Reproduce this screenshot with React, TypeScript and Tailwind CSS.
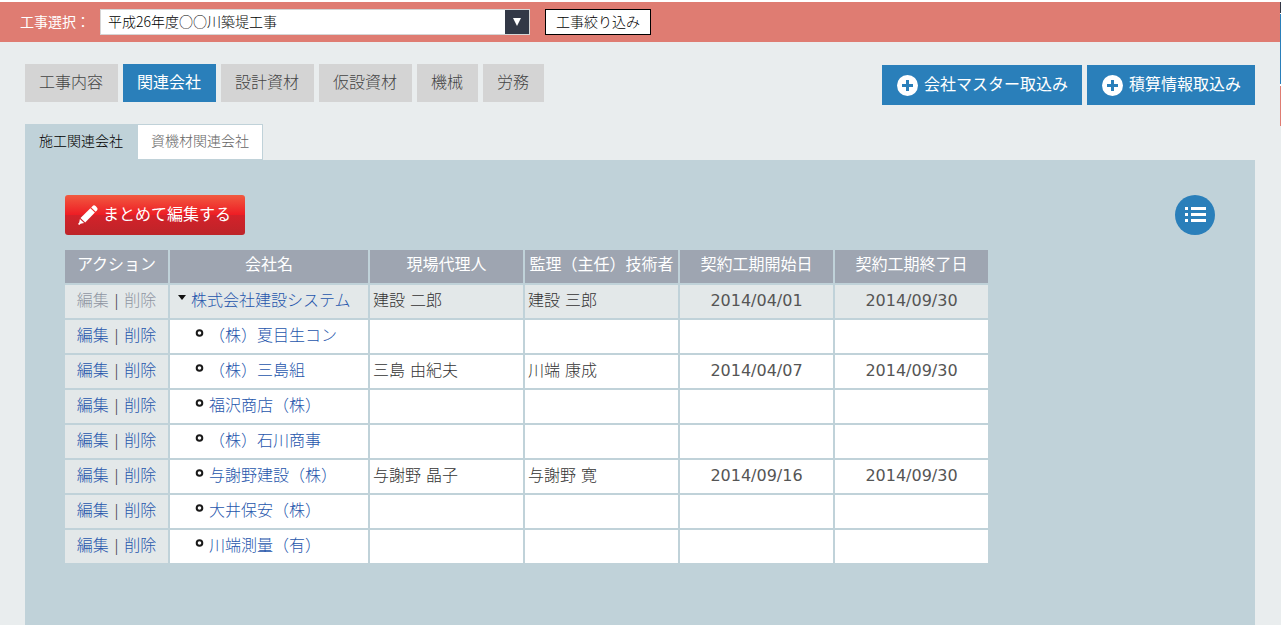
import { useState } from 'react';
import clsx from 'clsx';

type Company = {
  name: string;
  agent?: string;
  engineer?: string;
  start?: string;
  end?: string;
  root?: boolean;
};

const mainTabs = ['工事内容', '関連会社', '設計資材', '仮設資材', '機械', '労務'];
const subTabs = ['施工関連会社', '資機材関連会社'];
const importButtons = ['会社マスター取込み', '積算情報取込み'];

const companies: Company[] = [
  { name: '株式会社建設システム', agent: '建設 二郎', engineer: '建設 三郎', start: '2014/04/01', end: '2014/09/30', root: true },
  { name: '（株）夏目生コン' },
  { name: '（株）三島組', agent: '三島 由紀夫', engineer: '川端 康成', start: '2014/04/07', end: '2014/09/30' },
  { name: '福沢商店（株）' },
  { name: '（株）石川商事' },
  { name: '与謝野建設（株）', agent: '与謝野 晶子', engineer: '与謝野 寛', start: '2014/09/16', end: '2014/09/30' },
  { name: '大井保安（株）' },
  { name: '川端測量（有）' },
];

function PlusIcon() {
  return (
    <svg className="w-[21px] h-[21px]" viewBox="0 0 21 21" aria-hidden="true">
      <circle cx="10.5" cy="10.5" r="10.5" fill="#fff" />
      <path d="M9 5h3v4h4v3h-4v4H9v-4H5V9h4z" fill="#2a7fba" />
    </svg>
  );
}

function PencilIcon() {
  return (
    <svg className="w-5 h-5" viewBox="0 0 20 20" fill="#fff" aria-hidden="true">
      <path d="M14.4 1.2c1-1.100 2.200-1.100 3.200-.1l1.300 1.300c.9.9.9 2 0 3l-1.200 1.300-4.500-4.300z" />
      <path d="M12.400 3.300l4.500 4.300L7.200 17.600 2.500 13z" />
      <path d="M1.900 13.900l4.200 4.100-3.500.8L1.200 20 0 18.900l1.200-1.500z" />
    </svg>
  );
}

function ListIcon() {
  return (
    <svg className="w-[21px] h-[15px]" viewBox="0 0 21 15" fill="#fff" aria-hidden="true">
      <path d="M0 0h3v3H0zM6 0h15v3H6zM0 6h3v3H0zM6 6h15v3H6zM0 12h3v3H0zM6 12h15v3H6z" />
    </svg>
  );
}

function CompanyRow({ company }: { company: Company }) {
  const cell = company.root ? 'bg-[#e3e8e9]' : 'bg-white';
  const actionLink = company.root ? 'text-[#8f96a3]' : 'text-[#2656ac]';
  return (
    <tr className="h-[33px]">
      <td className="bg-[#e3e8e9] text-center whitespace-nowrap pb-0.5">
        <a href="#" className={actionLink}>編集</a>
        {' | '}
        <a href="#" className={actionLink}>削除</a>
      </td>
      <td className={clsx(cell, 'pb-0.5', company.root ? 'pl-2' : 'pl-[25px]')}>
        <div className="flex items-center gap-[5px]">
          {company.root ? (
            <svg className="w-2 h-3" viewBox="0 0 8 12" aria-hidden="true">
              <path d="M0 0h8L4 5z" fill="#111" />
            </svg>
          ) : (
            <svg className="w-[9px] h-3.5" viewBox="0 0 9 14" aria-hidden="true">
              <circle cx="4.500" cy="4" r="2.800" fill="none" stroke="#1a1a1a" strokeWidth="2" />
            </svg>
          )}
          <a href="#" className="text-[#2656ac]">{company.name}</a>
        </div>
      </td>
      <td className={clsx(cell, 'pl-[3px] pb-0.5')}>{company.agent}</td>
      <td className={clsx(cell, 'pl-[3px] pb-0.5')}>{company.engineer}</td>
      <td className={clsx(cell, 'text-center font-normal text-[#555] pb-0.5')}>{company.start}</td>
      <td className={clsx(cell, 'text-center font-normal text-[#555] pb-0.5')}>{company.end}</td>
    </tr>
  );
}

export default function App() {
  const [mainTab, setMainTab] = useState('関連会社');
  const [subTab, setSubTab] = useState('施工関連会社');

  return (
    <div className="min-h-screen flex bg-[#e9edee] text-[#333] text-base leading-6 font-light font-['DejaVu_Sans','Noto_Sans_CJK_JP',sans-serif]">
      <div className="flex-1 min-w-0 flex flex-col">
        {/* Project bar */}
        <header className="border-t-2 border-white bg-[#df7c72] h-[42px] flex items-center px-5 text-sm">
          <label htmlFor="project" className="text-white font-normal mr-2.5">工事選択：</label>
          <div className="relative w-[430px] mr-[15px]">
            <select
              id="project"
              className="block appearance-none w-full h-[26px] pl-[7px] pr-7 pb-0.5 bg-white border border-[#d5d5d5] text-black font-['Noto_Sans_CJK_JP',sans-serif]"
            >
              <option>平成26年度○○川築堤工事</option>
            </select>
            <span className="absolute right-px inset-y-px w-6 bg-[#323846] flex items-center justify-center pointer-events-none">
              <svg className="w-2 h-2" viewBox="0 0 8 8" aria-hidden="true">
                <path d="M0 0h8L4 8z" fill="#fff" />
              </svg>
            </span>
          </div>
          <button type="button" className="h-[26px] px-2.5 bg-white border border-black text-black leading-5">
            工事絞り込み
          </button>
        </header>

        <main className="flex-1 flex flex-col px-[25px] pt-[22px]">
          {/* Main tabs */}
          <div className="flex justify-between mb-[19px]">
            <nav className="flex gap-[5px]">
              {mainTabs.map((tab) => (
                <button
                  key={tab}
                  type="button"
                  onClick={() => setMainTab(tab)}
                  className={clsx(
                    'h-[38px] pl-3.5 pr-[15px] pb-px',
                    tab === mainTab ? 'bg-[#2a7fba] text-white font-normal' : 'bg-[#d4d4d4] text-[#444]'
                  )}
                >
                  {tab}
                </button>
              ))}
            </nav>
            <div className="flex gap-[5px] pt-px font-normal">
              {importButtons.map((label) => (
                <button
                  key={label}
                  type="button"
                  className="h-10 pl-[15px] pr-3.5 flex items-center gap-1.5 bg-[#2a7fba] text-white"
                >
                  <PlusIcon />
                  {label}
                </button>
              ))}
            </div>
          </div>

          {/* Sub tabs */}
          <div className="flex text-sm">
            {subTabs.map((tab) => (
              <button
                key={tab}
                type="button"
                onClick={() => setSubTab(tab)}
                className={clsx(
                  'h-9 px-[13px] pb-0.5 border border-[#c0d2d9]',
                  tab === subTab ? 'bg-[#c0d2d9] text-black' : 'bg-white text-[#666]'
                )}
              >
                {tab}
              </button>
            ))}
          </div>

          <section className="flex-1 bg-[#c0d2d9] px-10 pt-[35px] pb-10">
            <div className="flex justify-between items-center mb-[13px]">
              <button
                type="button"
                className="h-10 pl-[13px] pr-3.5 flex items-center gap-[5px] rounded-[3px] text-white font-normal bg-[linear-gradient(#f15a40_0%,#ee1c24_50%,#d3222a_51%,#bd2429_100%)]"
              >
                <PencilIcon />
                まとめて編集する
              </button>
              <button
                type="button"
                aria-label="一覧"
                className="w-10 h-10 rounded-full bg-[#2a7fba] flex items-center justify-center pb-px"
              >
                <ListIcon />
              </button>
            </div>

            {/* Company table */}
            <table className="-ml-0.5 table-fixed w-[927px] border-separate border-spacing-0.5">
              <thead>
                <tr className="h-[33px] bg-[#9ea5b1] text-white whitespace-nowrap">
                  <th className="w-[103px] font-normal pb-1">アクション</th>
                  <th className="w-[198px] font-normal pb-1">会社名</th>
                  <th className="font-normal pb-1">現場代理人</th>
                  <th className="font-normal pb-1">監理（主任）技術者</th>
                  <th className="font-normal pb-1">契約工期開始日</th>
                  <th className="font-normal pb-1">契約工期終了日</th>
                </tr>
              </thead>
              <tbody>
                {companies.map((company) => (
                  <CompanyRow key={company.name} company={company} />
                ))}
              </tbody>
            </table>
          </section>
        </main>
      </div>

      {/* Edge of the closed side menu */}
      <aside className="w-px pt-0.5 bg-white self-start">
        <div className="h-[11px] bg-[#323846]" />
        <div className="mt-px h-[70px] bg-[#2a7fba]" />
        <div className="mt-0.5 h-10 bg-[#df7c72]" />
      </aside>
    </div>
  );
}
